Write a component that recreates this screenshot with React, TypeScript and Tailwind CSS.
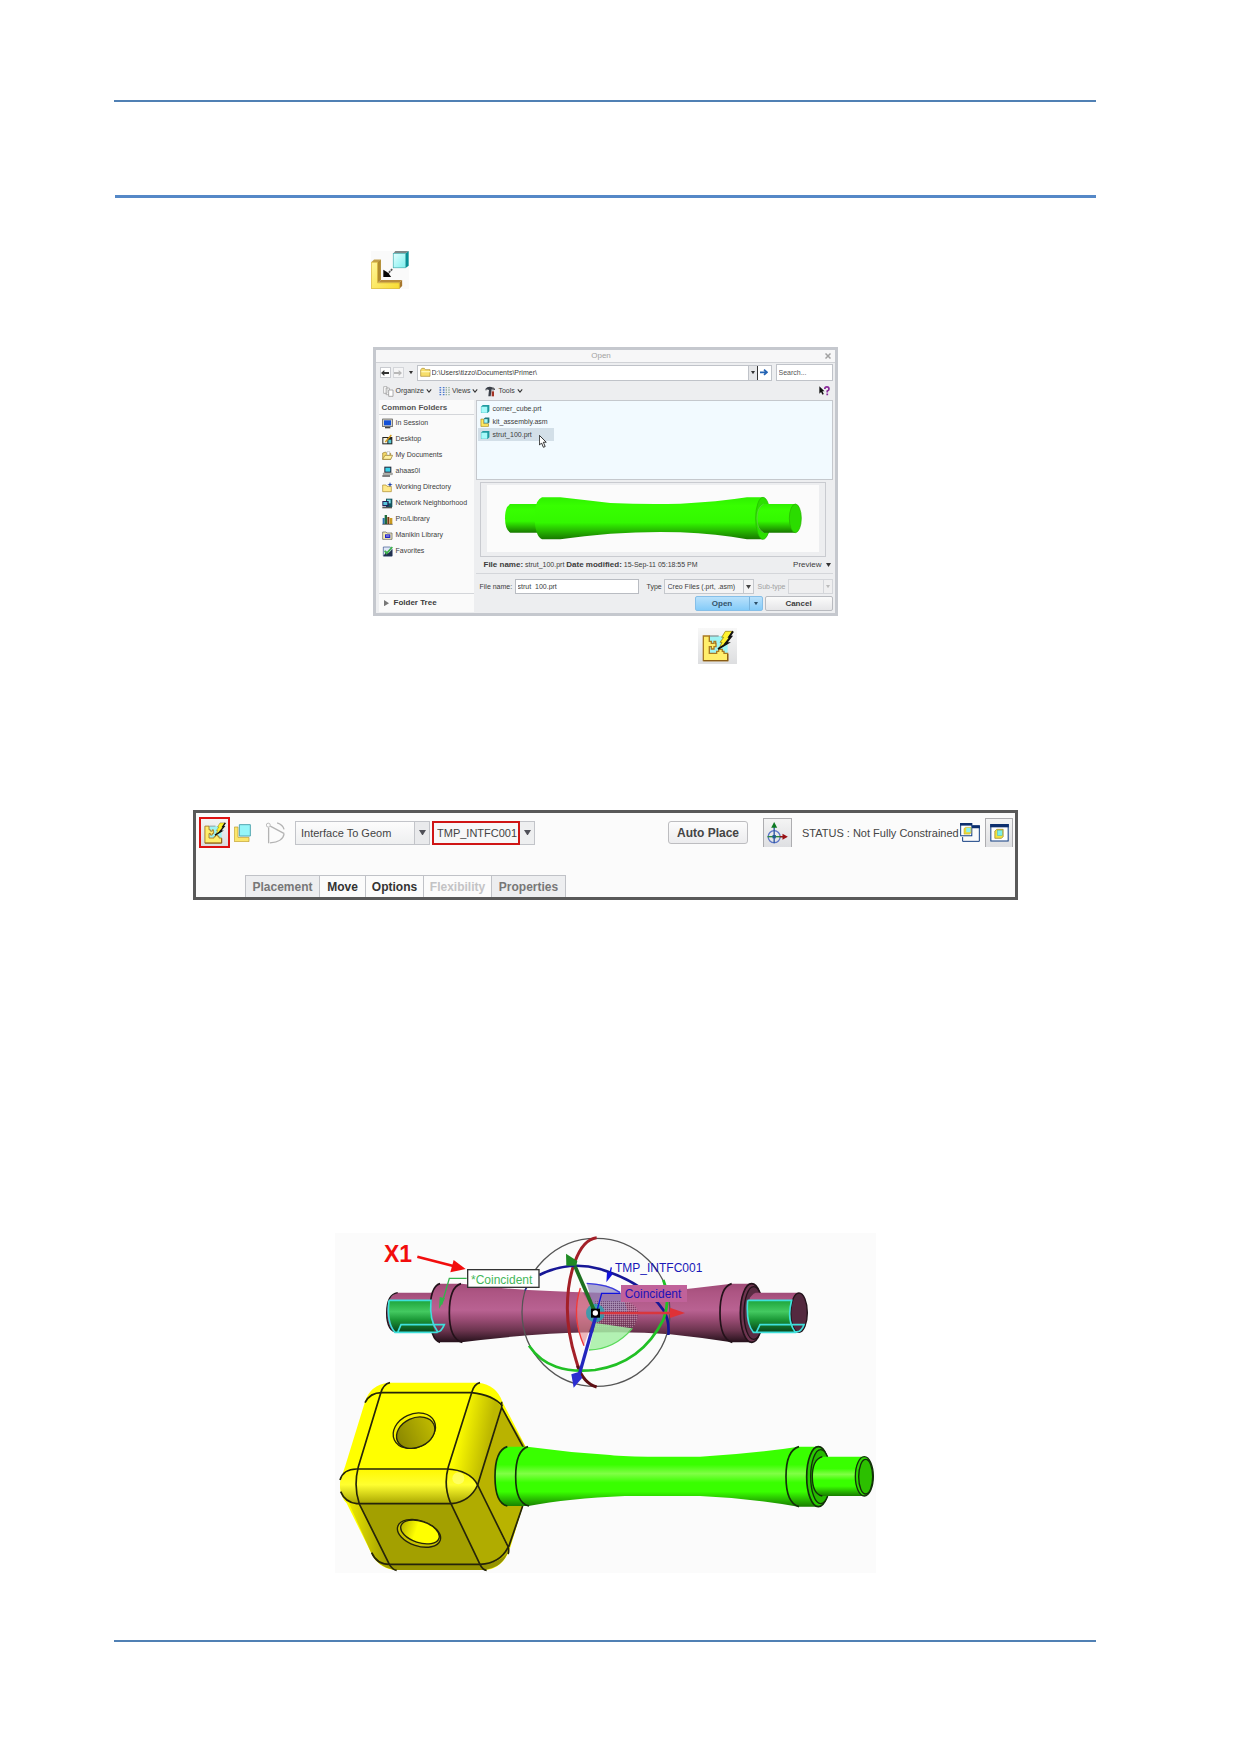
import React from "react";

const sans = "font-['Liberation_Sans',Arial,sans-serif]";

function AssembleIcon() {
  return (
    <svg viewBox="33 33 111 111" className="block size-[38px]" role="img" aria-label="Assemble">
      <defs>
        <linearGradient id="lfill" x1="0" y1="0" x2="1" y2="1">
          <stop offset="0" stopColor="#fff59c" />
          <stop offset="1" stopColor="#f8dc30" />
        </linearGradient>
        <linearGradient id="cfill" x1="0" y1="0" x2="1" y2="1">
          <stop offset="0" stopColor="#e4ffff" />
          <stop offset="1" stopColor="#7defee" />
        </linearGradient>
      </defs>
      <rect x="33" y="33" width="111" height="111" fill="#fafafa" />
      <path d="M34 66L42 58H62L54 66Z" fill="#c3a04a" />
      <path d="M52 66L62 58V118L52 126Z" fill="#b08a2e" />
      <path d="M52 126L62 118H124L116 126Z" fill="#b98d3c" />
      <path d="M116 126L124 118V135L116 143Z" fill="#a6762c" />
      <path d="M34 66H52V126H116V143H34Z" fill="url(#lfill)" stroke="#d0a824" strokeWidth="2" />
      <path d="M98 40L104 33H143L134 40Z" fill="#7d8888" />
      <path d="M134 40L143 33V76L134 83Z" fill="#078f95" />
      <rect x="98" y="40" width="36" height="42" fill="url(#cfill)" stroke="#43aeb0" strokeWidth="2" />
      <path d="M95 86L82 99" stroke="#555" strokeWidth="5" strokeDasharray="6 2" />
      <path d="M69 88L76 92L84 98L92 109H69Z" fill="#050505" />
    </svg>
  );
}

function InterfaceGlyph({ className }: { className: string }) {
  return (
    <svg viewBox="306 446 96 96" className={className} aria-hidden="true">
      <rect x="329" y="464" width="54" height="54" fill="#9df3f3" />
      <path d="M329 464H356" stroke="#8a9a9a" strokeWidth="4" />
      <path
        d="M310 464H328V480H334V486H342V480H347V486H348V496H342V503H334V496H328V516H350V510H356V504H367V510H372V516H383V538H310Z"
        fill="#ffee6c"
        stroke="#a97a22"
        strokeWidth="4"
      />
      <path d="M310 538H383V518" fill="none" stroke="#8a5c14" strokeWidth="4" />
      <path d="M376 450H399L388 466H393L377 486H382L356 503L366 483H360L371 468H365Z" fill="#fff22e" stroke="#8a7000" strokeWidth="2" />
      <path d="M399 450L388 466H393L377 486H382L354 503" fill="none" stroke="#111" strokeWidth="6" />
    </svg>
  );
}

function Rod({ id, top, mid, low }: { id: string; top: string; mid: string; low: string }) {
  return (
    <linearGradient id={id} x1="0" y1="0" x2="0" y2="1">
      <stop offset="0" stopColor={top} />
      <stop offset=".3" stopColor={top} />
      <stop offset=".45" stopColor={mid} />
      <stop offset=".6" stopColor={top} />
      <stop offset=".75" stopColor={top} />
      <stop offset="1" stopColor={low} />
    </linearGradient>
  );
}

function PreviewStrut() {
  return (
    <svg viewBox="350 15 996 201" className="block h-[67px] w-full bg-[#fbfbfb]" role="img" aria-label="Preview of strut_100.prt">
      <defs>
        <linearGradient id="pv" x1="0" y1="0" x2="0" y2="1">
          <stop offset="0" stopColor="#2ff000" />
          <stop offset=".2" stopColor="#37ff00" />
          <stop offset=".6" stopColor="#33f800" />
          <stop offset="1" stopColor="#187800" />
        </linearGradient>
      </defs>
      <path d="M420 72H520V158H420Q404 150 404 115T420 72Z" fill="url(#pv)" />
      <path
        d="M515 52H570Q640 60 720 69Q830 74 930 71Q1040 66 1130 52H1176Q1198 60 1200 115T1176 178H1130Q1040 162 930 157Q830 154 720 161Q640 168 570 178H515Q494 168 493 115T515 52Z"
        fill="url(#pv)"
      />
      <ellipse cx="1178" cy="115" rx="22" ry="63" fill="#2be000" stroke="#24b400" strokeWidth="2" />
      <path d="M1180 72H1275V158H1180Q1160 150 1160 115T1180 72Z" fill="url(#pv)" />
      <path d="M1180 72Q1160 82 1160 115T1180 158" fill="none" stroke="#6cca58" strokeWidth="2" />
      <ellipse cx="1275" cy="115" rx="18" ry="43" fill="#2bdc00" stroke="#27b000" strokeWidth="2" />
    </svg>
  );
}

function Svg({ children, className = "size-[11px]" }: { children: React.ReactNode; className?: string }) {
  return (
    <svg viewBox="0 0 33 33" className={"block shrink-0 " + className} aria-hidden="true">
      {children}
    </svg>
  );
}

const folders: { name: string; icon: React.ReactNode }[] = [
  {
    name: "In Session",
    icon: (
      <Svg>
        <rect x="2" y="3" width="29" height="23" fill="#d6d2c4" stroke="#444" strokeWidth="2" />
        <rect x="6" y="7" width="21" height="15" fill="#1250d8" />
        <path d="M9 29H25" stroke="#444" strokeWidth="4" />
      </Svg>
    ),
  },
  {
    name: "Desktop",
    icon: (
      <Svg>
        <path d="M1 9H31V31H1Z" fill="#222" />
        <rect x="4" y="12" width="12" height="16" fill="#f4f4e8" />
        <rect x="19" y="17" width="9" height="11" fill="#57c9d4" />
        <path d="M10 24L28 3" stroke="#d69b17" strokeWidth="4" />
      </Svg>
    ),
  },
  {
    name: "My Documents",
    icon: (
      <Svg>
        <path d="M2 28V9L11 6L14 10H26V28Z" fill="#f2d766" stroke="#96782a" strokeWidth="2" />
        <path d="M2 28L9 16H32L26 28Z" fill="#fff1a0" stroke="#96782a" strokeWidth="2" />
        <path d="M15 5H23V15H15Z" fill="#fff" stroke="#777" />
      </Svg>
    ),
  },
  {
    name: "ahaas0l",
    icon: (
      <Svg>
        <path d="M7 2H28V20H7Z" fill="#223" />
        <path d="M10 5H25V17H10Z" fill="#3ed0e8" />
        <path d="M4 21H31V26H4Z" fill="#c9c9c0" stroke="#333" />
        <path d="M1 30H24" stroke="#444" strokeWidth="4" />
      </Svg>
    ),
  },
  {
    name: "Working Directory",
    icon: (
      <Svg>
        <path d="M2 29V9H12L15 13H28V29Z" fill="#ffe98a" stroke="#a98a2c" strokeWidth="2" />
        <path d="M24 0L26 6L32 8L26 10L24 16L22 10L16 8L22 6Z" fill="#1c3fa8" />
      </Svg>
    ),
  },
  {
    name: "Network Neighborhood",
    icon: (
      <Svg>
        <rect x="12" y="2" width="19" height="25" fill="#17555f" />
        <rect x="15" y="5" width="11" height="11" fill="#7ee1ea" />
        <rect x="1" y="9" width="19" height="16" fill="#225" />
        <rect x="4" y="12" width="12" height="9" fill="#55c4dc" />
        <path d="M1 29H30" stroke="#555" strokeWidth="4" />
      </Svg>
    ),
  },
  {
    name: "Pro/Library",
    icon: (
      <Svg>
        <rect x="2" y="12" width="6" height="18" fill="#2b6fb0" />
        <rect x="8" y="3" width="7" height="27" fill="#1f6a3c" />
        <rect x="16" y="9" width="6" height="21" fill="#7a3b12" />
        <rect x="23" y="12" width="8" height="18" fill="#c99a20" />
        <path d="M1 31H32" stroke="#222" strokeWidth="2" />
      </Svg>
    ),
  },
  {
    name: "Manikin Library",
    icon: (
      <Svg>
        <path d="M2 28V6H12L15 9H30V28Z" fill="#f6efb8" stroke="#555" strokeWidth="2" />
        <rect x="9" y="13" width="16" height="11" fill="#2023c8" />
        <path d="M12 18H22" stroke="#fff" strokeWidth="2" />
      </Svg>
    ),
  },
  {
    name: "Favorites",
    icon: (
      <Svg>
        <path d="M4 3H25L30 9V30H4Z" fill="#dfe8f8" stroke="#38518a" strokeWidth="2" />
        <path d="M4 30L14 16L19 22L31 10V31H4Z" fill="#22314f" />
        <path d="M8 14L14 22L31 3" fill="none" stroke="#3db54a" strokeWidth="5" />
      </Svg>
    ),
  },
];

function PartIcon() {
  return (
    <Svg className="size-[10px]">
      <path d="M3 9L9 3H31V24L25 30H3Z" fill="#1f9ba0" />
      <rect x="4" y="9" width="20" height="20" fill="#a6fafa" />
    </Svg>
  );
}

function AsmIcon() {
  return (
    <Svg className="size-[10px]">
      <path d="M3 7H12V22H28V31H3Z" fill="#ffea62" stroke="#a17c14" strokeWidth="2" />
      <path d="M13 5L17 2H31V18L27 21H13Z" fill="#23777c" />
      <rect x="14" y="7" width="11" height="12" fill="#a6fafa" />
    </Svg>
  );
}

const files = [
  { name: "corner_cube.prt", icon: <PartIcon />, selected: false },
  { name: "kit_assembly.asm", icon: <AsmIcon />, selected: false },
  { name: "strut_100.prt", icon: <PartIcon />, selected: true },
];

function Caret({ className = "w-[5px] text-[#444]" }: { className?: string }) {
  return (
    <svg viewBox="0 0 10 8" className={"block shrink-0 " + className} aria-hidden="true">
      <path d="M0 0H10L5 8Z" fill="currentColor" />
    </svg>
  );
}

function Chevron() {
  return (
    <svg viewBox="0 0 12 9" className="block h-[4px] w-[6px]" aria-hidden="true">
      <path d="M1 1L6 7L11 1" fill="none" stroke="#333" strokeWidth="2.4" />
    </svg>
  );
}

function OpenDialog() {
  return (
    <section
      aria-label="Open"
      className="mx-auto flex h-[269px] w-[465px] max-w-full flex-col border-[3px] border-[#c5c8ce] bg-[#edeef0] text-[7px] leading-[10px] text-[#3c3c3c]"
    >
      <header className="relative flex h-[13px] items-center justify-center border-b border-[#d0d2d6] bg-[#f7f7f8] pr-2 text-[8px] text-[#a2a2a2]">
        Open
        <button aria-label="Close" className="absolute right-1 top-[3px]">
          <svg viewBox="0 0 12 12" className="block size-[6px]">
            <path d="M1 1L11 11M11 1L1 11" stroke="#a2a2a2" strokeWidth="3" />
          </svg>
        </button>
      </header>

      <div className="flex h-[19px] items-center pl-1 pr-[2px]">
        <button aria-label="Back" className="flex size-[11px] items-center justify-center border border-[#c9cbd0] bg-white">
          <svg viewBox="0 0 24 18" className="block w-[8px]">
            <path d="M0 9L10 0V6H24V12H10V18Z" fill="#333" />
          </svg>
        </button>
        <button aria-label="Forward" className="ml-[2px] flex size-[11px] items-center justify-center border border-[#d4d6da] bg-[#f5f5f6]">
          <svg viewBox="0 0 24 18" className="block w-[8px]">
            <path d="M24 9L14 0V6H0V12H14V18Z" fill="#b8b8b8" />
          </svg>
        </button>
        <button aria-label="Recent" className="ml-[5px] mr-1">
          <Caret className="w-[4px] text-[#333]" />
        </button>
        <div className="flex h-4 min-w-0 flex-1 items-center border border-[#c0c3c9] bg-white pl-[2px]">
          <Svg>
            <path d="M2 28V8L6 4H13L16 8H30V28Z" fill="#f7df6c" stroke="#a98a2c" strokeWidth="2" />
            <path d="M4 14H30" stroke="#fff6b4" strokeWidth="4" />
          </Svg>
          <input
            aria-label="Folder path"
            defaultValue={"D:\\Users\\tizzo\\Documents\\Primer\\"}
            className="min-w-0 flex-1 bg-transparent px-[1px] outline-none"
          />
          <button aria-label="Path history" className="flex h-full w-[10px] items-center justify-center border-x border-l-[#c0c3c9] border-r-[#333] bg-[#e6e7e9]">
            <Caret className="w-[4px] text-[#333]" />
          </button>
          <button aria-label="Go" className="flex w-[13px] justify-center">
            <svg viewBox="0 0 24 20" className="block w-[8px]">
              <path d="M0 10H20M12 2L21 10L12 18" fill="none" stroke="#2464b4" strokeWidth="5" />
            </svg>
          </button>
        </div>
        <input
          aria-label="Search"
          placeholder="Search..."
          className="ml-1 h-[17px] w-[57px] border border-[#c0c3c9] bg-white px-[2px] outline-none placeholder:text-[#555]"
        />
      </div>

      <div className="flex h-[18px] items-center pl-[7px] pr-[5px]">
        <button className="flex items-center gap-[2px]">
          <Svg>
            <path d="M2 2H12V22H2Z M9 6H19V26H9Z" fill="#fff" stroke="#999" strokeWidth="2" />
            <path d="M17 12H30V31H17Z" fill="#fff" stroke="#888" strokeWidth="2" />
          </Svg>
          Organize <Chevron />
        </button>
        <button className="ml-[7px] flex items-center gap-[2px]">
          <Svg>
            <path d="M4 3V31M14 3V31" stroke="#4b78d0" strokeWidth="5" strokeDasharray="4 3" />
            <path d="M22 3V31M30 3V31" stroke="#8fae9a" strokeWidth="4" strokeDasharray="4 3" />
          </Svg>
          Views <Chevron />
        </button>
        <button className="ml-[7px] flex items-center gap-[2px]">
          <Svg>
            <path d="M1 9Q8 0 19 3L30 8V12L20 10L17 31H10L12 12L5 10L3 15Z" fill="#3a3f48" />
            <path d="M20 16H27V31H20Z" fill="#a33323" />
            <path d="M24 3V14" stroke="#777" strokeWidth="3" />
          </Svg>
          Tools <Chevron />
        </button>
        <button aria-label="Context help" className="ml-auto">
          <svg viewBox="0 0 32 28" className="block h-[10px] w-[11px]">
            <path d="M1 0V22L6 17L10 25L14 23L10 15H16Z" fill="#111" />
            <path d="M17 8Q17 2 23 2T29 8Q29 12 24 14V18M24 21V26" fill="none" stroke="#8a2b9b" strokeWidth="5" />
          </svg>
        </button>
      </div>

      <div className="flex min-h-0 flex-1 gap-[2px] pb-px pl-[3px] pr-[2px]">
        <nav aria-label="Common Folders" className="flex w-[95px] shrink-0 flex-col bg-[#fafafa]">
          <h2 className="flex h-[15px] items-end border-b border-[#d4d6da] pb-px pl-[3px] text-[8px] font-bold text-[#555]">
            Common Folders
          </h2>
          <ul>
            {folders.map((f) => (
              <li key={f.name}>
                <button className="flex h-4 w-full items-center gap-[3px] whitespace-nowrap pl-[3px] text-left">
                  {f.icon}
                  {f.name}
                </button>
              </li>
            ))}
          </ul>
          <button className="mt-auto flex h-[19px] items-center gap-[5px] border-t border-[#d4d6da] pl-[5px] text-[8px] font-bold">
            <svg viewBox="0 0 8 10" className="block w-[5px]" aria-hidden="true">
              <path d="M0 0L8 5L0 10Z" fill="#777" />
            </svg>
            Folder Tree
          </button>
        </nav>

        <div className="flex min-w-0 flex-1 flex-col">
          <ul className="h-[80px] border border-[#c5c8cd] bg-[#f2faff] p-px">
            {files.map((f) => (
              <li key={f.name}>
                <button
                  className={
                    "relative flex h-[13px] w-[76px] items-center gap-[3px] pl-[2px] " +
                    (f.selected ? "bg-[#d3dfe8]" : "")
                  }
                >
                  {f.icon}
                  {f.name}
                  {f.selected && (
                    <svg viewBox="0 0 22 36" className="absolute left-[61px] top-[7px] block h-[13px] w-[8px]" aria-hidden="true">
                      <path d="M1 1V28L7 22L12 34L17 32L12 20H20Z" fill="#fff" stroke="#222" strokeWidth="2.5" />
                    </svg>
                  )}
                </button>
              </li>
            ))}
          </ul>

          <div className="ml-1 mr-[7px] mt-[2px] h-[75px] border border-[#c9cbd0] px-[6px] pt-[2px]">
            <PreviewStrut />
          </div>

          <div className="flex h-[17px] items-center justify-between border-b border-[#d4d6da] pl-2 pr-[2px]">
            <p>
              <b className="text-[8px]">File name:</b> strut_100.prt <b className="text-[8px]">Date modified:</b> 15-Sep-11 05:18:55 PM
            </p>
            <button className="flex items-center gap-1 text-[8px]">
              Preview <Caret className="w-[5px] text-[#333]" />
            </button>
          </div>

          <div className="mt-[5px] flex h-[15px] items-center pl-1">
            <label htmlFor="filename" className="w-[35px] shrink-0">
              File name:
            </label>
            <input
              id="filename"
              defaultValue="strut_100.prt"
              className="h-[15px] min-w-0 flex-1 border border-[#b9bcc2] bg-white px-[2px] leading-[13px] outline-none"
            />
            <label htmlFor="type" className="ml-2 w-[17px] shrink-0">
              Type
            </label>
            <span className="flex h-[15px] w-[90px] items-center border border-[#c5c8cd] bg-[#f4f4f5]">
              <select id="type" className="min-w-0 flex-1 appearance-none bg-transparent pl-[3px] outline-none">
                <option>Creo Files (.prt, .asm)</option>
              </select>
              <span className="flex h-full w-[10px] items-center justify-center border-l border-[#c5c8cd]">
                <Caret className="w-[5px] text-[#444]" />
              </span>
            </span>
            <label htmlFor="subtype" className="ml-1 w-[30px] shrink-0 text-[#a0a0a0]">
              Sub-type
            </label>
            <span className="flex h-[15px] w-[45px] items-center border border-[#d4d6da] bg-[#efeff0]">
              <select id="subtype" disabled className="min-w-0 flex-1 appearance-none bg-transparent outline-none" />
              <span className="flex h-full w-[9px] items-center justify-center border-l border-[#d4d6da]">
                <Caret className="w-[4px] text-[#bbb]" />
              </span>
            </span>
          </div>

          <div className="mt-[2px] flex h-[15px] justify-end gap-[2px] text-[8px] font-bold">
            <div className="flex w-[68px] rounded-[2px] border border-[#86bfe8] bg-linear-to-b from-[#b9e1fb] to-[#84cbf8]">
              <button className="flex-1 text-[#33536b]">Open</button>
              <button aria-label="More open options" className="flex w-[13px] items-center justify-center border-l border-[#79b3dc]">
                <Caret className="w-[4px] text-[#2c4f68]" />
              </button>
            </div>
            <button className="w-[68px] rounded-[2px] border border-[#b9bbc0] bg-linear-to-b from-[#fbfbfb] to-[#e6e6e8]">
              Cancel
            </button>
          </div>
        </div>
      </div>
    </section>
  );
}

const tabs = [
  { name: "Placement", style: "w-[74px] bg-[#edeef0] text-[#777]" },
  { name: "Move", style: "w-[46px] text-[#333]" },
  { name: "Options", style: "w-[58px] text-[#333]" },
  { name: "Flexibility", style: "w-[68px] text-[#c3c3c5]" },
  { name: "Properties", style: "w-[75px] border-r-1 bg-[#edeef0] text-[#777]" },
];

function PlacementBar() {
  return (
    <section
      aria-label="Component placement"
      className="ml-[79px] mr-[78px] flex h-[90px] flex-col justify-between border-[3px] border-[#595959] bg-[#fbfbfb] text-[11px] leading-4 text-[#444]"
    >
      <div className="flex items-center pl-[3px] pr-[2px] pt-1">
        <button
          aria-label="Place using interface"
          className="flex size-[31px] items-center justify-center border-2 border-[#dd1111] bg-linear-to-b from-[#f3f3f3] to-[#dcdde0]"
        >
          <InterfaceGlyph className="block size-[22px]" />
        </button>
        <button aria-label="Place manually" className="ml-1">
          <svg viewBox="0 0 51 54" className="block h-[18px] w-[17px]">
            <path d="M1 9H12V40H45V53H1Z" fill="#fbe66c" stroke="#b8952c" strokeWidth="2" />
            <path d="M16 2H49V36H16Z" fill="#95f5f8" stroke="#52a6b0" strokeWidth="3" />
          </svg>
        </button>
        <button aria-label="Convert constraints" className="ml-[15px]">
          <svg viewBox="228 52 58 66" className="block h-[22px] w-[19px]">
            <circle cx="235" cy="61" r="6" fill="none" stroke="#bbb" strokeWidth="3" />
            <path d="M236 68V116M241 64L284 87M262 54Q280 60 283 74M283 88Q280 112 240 115" fill="none" stroke="#b3b3b3" strokeWidth="4" />
          </svg>
        </button>
        <span className="ml-[10px] flex h-6 w-[135px] items-center border border-[#c2c4c9] bg-linear-to-b from-[#fcfcfc] to-[#eeeff0]">
          <select aria-label="Interface type" className="min-w-0 flex-1 appearance-none bg-transparent pl-[5px] outline-none">
            <option>Interface To Geom</option>
          </select>
          <span className="flex h-full w-[15px] items-center justify-center border-l border-[#c2c4c9] bg-[#e9eaec]">
            <Caret className="w-[7px] text-[#505058]" />
          </span>
        </span>
        <span className="ml-[2px] flex h-6 w-[103px] items-center">
          <select
            aria-label="Interface"
            className="h-6 w-[88px] appearance-none border-2 border-[#cf1515] bg-[#f7f7f8] pl-[3px] outline-none"
          >
            <option>TMP_INTFC001</option>
          </select>
          <span className="flex h-full flex-1 items-center justify-center border border-l-0 border-[#c2c4c9] bg-[#eeeff0]">
            <Caret className="w-[7px] text-[#505058]" />
          </span>
        </span>
        <button className="ml-auto h-[23px] w-[80px] rounded-[3px] border border-[#bdbdc0] bg-linear-to-b from-[#fcfcfc] to-[#ececee] text-[12px] font-bold">
          Auto Place
        </button>
        <button
          aria-label="3D dragger"
          className="ml-[15px] flex size-[29px] items-center justify-center border border-b-0 border-[#adadb0] bg-linear-to-b from-[#f4f4f4] to-[#dedfe2]"
        >
          <svg viewBox="346 53 62 66" className="block h-[22px] w-[21px]">
            <circle cx="367" cy="97" r="18" fill="none" stroke="#5c76c8" strokeWidth="4" />
            <path d="M367 62V117" stroke="#2a55a0" strokeWidth="4" />
            <path d="M347 97H398" stroke="#2c8a3a" strokeWidth="4" />
            <path d="M384 97H398" stroke="#901818" strokeWidth="4" />
            <path d="M358 70L367 53L376 70Z" fill="#0d7a22" />
            <path d="M392 88L408 97L392 106Z" fill="#9a0f14" />
            <rect x="362" y="92" width="10" height="10" fill="#235b94" />
          </svg>
        </button>
        <output className="ml-[10px] w-[158px] whitespace-nowrap">STATUS : Not Fully Constrained</output>
        <button aria-label="Separate window">
          <svg viewBox="930 53 61 58" className="block h-[19px] w-[20px]">
            <path d="M968 62H989V109H938V96" fill="none" stroke="#0d3a80" strokeWidth="3" />
            <path d="M966 60H991V69H966Z" fill="#0d2f6e" />
            <rect x="932" y="55" width="34" height="37" fill="#fff" stroke="#0d3a80" strokeWidth="3" />
            <path d="M930 53H967V61H930Z" fill="#0d2f6e" />
            <path d="M942 70L947 66H964V82L960 87H942Z" fill="#e9d83a" stroke="#a48e20" />
            <rect x="949" y="68" width="13" height="13" fill="#8cf2ee" />
          </svg>
        </button>
        <button
          aria-label="Assembly window"
          className="ml-[5px] flex h-[29px] w-7 items-center justify-center border border-b-0 border-[#adadb0] bg-linear-to-b from-[#f4f4f4] to-[#dedfe2]"
        >
          <svg viewBox="1019 59 56 54" className="block h-[18px] w-[19px]">
            <rect x="1021" y="61" width="52" height="49" fill="#fff" stroke="#0d3a80" strokeWidth="3" />
            <path d="M1019 59H1075V69H1019Z" fill="#0d2f6e" />
            <path d="M1033 80L1039 75H1058V97L1053 102H1033Z" fill="#f2e13e" stroke="#927d20" strokeWidth="2" />
            <rect x="1040" y="78" width="15" height="16" fill="#7ceee9" stroke="#3a9a9a" />
          </svg>
        </button>
      </div>
      <div role="tablist" className="ml-[49px] flex h-[22px]">
        {tabs.map((t) => (
          <button
            key={t.name}
            role="tab"
            className={"border-l border-t border-[#c0c2c7] text-center text-[12px] font-bold " + t.style}
          >
            {t.name}
          </button>
        ))}
      </div>
    </section>
  );
}

function Figure() {
  return (
    <svg
      viewBox="0 0 1623 1020"
      className={"mx-auto block h-[340px] w-[541px] max-w-full bg-[#fbfbfb] " + sans}
      role="img"
      aria-label="Strut placed over the cube assembly"
    >
      <defs>
        <linearGradient id="pu" x1="0" y1="0" x2="0" y2="1">
          <stop offset="0" stopColor="#a04c78" />
          <stop offset=".15" stopColor="#ad5583" />
          <stop offset=".45" stopColor="#b96292" />
          <stop offset=".6" stopColor="#9c4d76" />
          <stop offset=".8" stopColor="#6b344e" />
          <stop offset="1" stopColor="#25111b" />
        </linearGradient>
        <linearGradient id="gp" x1="0" y1="0" x2="0" y2="1">
          <stop offset="0" stopColor="#1ea53c" />
          <stop offset=".35" stopColor="#43c960" />
          <stop offset=".6" stopColor="#1c9a38" />
          <stop offset="1" stopColor="#07421a" />
        </linearGradient>
        <Rod id="gr" top="#39ff00" mid="#80ff45" low="#187c00" />
        <linearGradient id="edge" x1="0" y1="0" x2="0" y2="1">
          <stop offset="0" stopColor="#fff800" />
          <stop offset=".45" stopColor="#ffff30" />
          <stop offset="1" stopColor="#a8a500" />
        </linearGradient>
        <linearGradient id="side" x1="0" y1="0" x2="1" y2=".3">
          <stop offset=".3" stopColor="#ffff00" />
          <stop offset=".85" stopColor="#bdb800" />
        </linearGradient>
        <linearGradient id="lowL" x1="0" y1="0" x2="1" y2="0">
          <stop offset="0" stopColor="#f0ec00" />
          <stop offset=".8" stopColor="#a3a000" />
        </linearGradient>
        <linearGradient id="hole" x1="0" y1="0" x2="1" y2="0">
          <stop offset="0" stopColor="#8a8700" />
          <stop offset="1" stopColor="#c0bb00" />
        </linearGradient>
        <linearGradient id="hole2" x1="0" y1="0" x2="1" y2="0">
          <stop offset="0" stopColor="#bab600" />
          <stop offset=".4" stopColor="#ffff00" />
        </linearGradient>
        <pattern id="dots" width="6" height="6" patternUnits="userSpaceOnUse">
          <rect width="3" height="3" fill="#5c3a55" />
          <rect x="3" y="3" width="3" height="3" fill="#b3a0ae" />
        </pattern>
      </defs>

      {/* strut being placed */}
      <path d="M187 179H320V298H187Q155 290 155 240T187 179Z" fill="url(#pu)" />
      <path d="M188 179Q155 184 155 240T188 298" fill="none" stroke="#23121a" strokeWidth="4" />
      <path
        d="M315 152H380Q500 168 645 174T845 181Q960 180 1075 166L1190 152H1250Q1282 160 1282 240T1250 328H1190Q1100 314 1005 304Q930 298 845 298Q740 298 645 302Q500 312 380 328H315Q285 318 285 240T315 152Z"
        fill="url(#pu)"
      />
      <g fill="none" stroke="#23121a" strokeWidth="5">
        <path d="M315 152Q285 160 285 240T315 328" />
        <path d="M378 152Q343 162 343 240T382 328" />
        <path d="M1190 152Q1155 162 1155 240T1192 328" />
      </g>
      <ellipse cx="1250" cy="240" rx="34" ry="88" fill="#6d3550" stroke="#23121a" strokeWidth="5" />
      <ellipse cx="1256" cy="240" rx="29" ry="79" fill="#5b2c44" stroke="#23121a" strokeWidth="4" />
      <path d="M1262 179H1392V298H1262Q1236 290 1236 240T1262 179Z" fill="url(#pu)" />
      <ellipse cx="1392" cy="239" rx="25" ry="59" fill="#54293f" stroke="#23121a" strokeWidth="4" />

      {/* highlighted surfaces */}
      <path d="M162 202H286Q282 250 300 298H180Q156 260 162 202Z" fill="url(#gp)" />
      <path d="M1238 202H1370Q1356 250 1380 298H1255Q1232 260 1238 202Z" fill="url(#gp)" />
      <g fill="none" stroke="#3fe0dc" strokeWidth="5">
        <path d="M162 202H288Q282 262 308 296Q318 298 328 275H198L188 298M162 202Q154 270 180 298H308" />
        <path d="M1238 202H1370Q1354 262 1380 296Q1398 300 1407 275H1275L1264 298M1238 202Q1232 270 1255 298H1384" />
      </g>

      {/* dragger */}
      <circle cx="783" cy="238" r="222" fill="none" stroke="#555" strokeWidth="4" />
      <path d="M735 165Q706 250 747 338L781 240Z" fill="#e28a92" fillOpacity=".6" />
      <path d="M736 165Q708 250 747 338" fill="none" stroke="#f03a3a" strokeWidth="4" />
      <path d="M755 151Q830 152 860 182L880 240H781Z" fill="#8d86bb" fillOpacity=".7" />
      <path d="M755 151Q820 154 855 178" fill="none" stroke="#3a3ae0" strokeWidth="4" />
      <path d="M781 205L880 205Q910 225 910 240Q905 270 892 286H781Z" fill="url(#dots)" fillOpacity=".75" />
      <path d="M762 351L781 270L890 286Q840 350 762 351Z" fill="#a4efa4" fillOpacity=".85" />
      <path d="M762 351Q840 348 892 286" fill="none" stroke="#5ada5a" strokeWidth="4" />
      <path d="M785 14C728 20 697 130 697 226S725 380 730 406" fill="none" stroke="#a32028" strokeWidth="9" />
      <path d="M728 398Q745 450 785 462" fill="none" stroke="#5d1014" strokeWidth="9" />
      <path d="M570 172Q585 145 613 126" fill="none" stroke="#24249a" strokeWidth="4" />
      <path d="M613 126Q700 82 795 108Q930 150 985 231Q1004 262 1000 306" fill="none" stroke="#171796" strokeWidth="8" />
      <path d="M582 338C625 400 690 420 780 411C890 395 950 330 985 260Q1008 200 985 141" fill="none" stroke="#21c025" strokeWidth="8" />
      <circle cx="781" cy="240" r="28" fill="#2b9fae" fillOpacity=".85" />
      <path d="M720 100L780 238" stroke="#1d7020" strokeWidth="11" />
      <path d="M693 62L727 84L724 98L694 98Z" fill="#1f8a24" />
      <path d="M785 241L733 424" stroke="#2326bd" strokeWidth="10" />
      <path d="M709 424L733 416L742 434L716 464Z" fill="#2c2ed0" />
      <path d="M785 240H1008" stroke="#d9363d" strokeWidth="8" />
      <path d="M1005 224L1050 240L1005 255Z" fill="#df3137" />
      <path d="M856 181H800L784 240" fill="none" stroke="#1111dd" strokeWidth="4" />
      <rect x="768" y="227" width="27" height="27" fill="#000" />
      <circle cx="781" cy="240" r="8" fill="#fff" />

      {/* callouts */}
      <path d="M395 136H343L320 215" fill="none" stroke="#35b34c" strokeWidth="4" />
      <path d="M314 192L330 196L312 228Z" fill="#35b34c" />
      <rect x="398" y="110" width="214" height="53" fill="#fff" stroke="#333" strokeWidth="4" />
      <text x="408" y="153" fontSize="36" fill="#45b75a">*Coincident</text>
      <text x="147" y="86" fontSize="69" fontWeight="bold" fill="#f20d0d">X1</text>
      <path d="M247 71L355 99" stroke="#f20d0d" strokeWidth="8" />
      <path d="M356 81L392 108L346 118Z" fill="#f20d0d" />
      <text x="840" y="117" fontSize="36" fill="#1818b8">TMP_INTFC001</text>
      <path d="M829 103L825 122" stroke="#1111dd" strokeWidth="4" />
      <path d="M816 116L834 122L814 148Z" fill="#1111dd" />
      <rect x="858" y="156" width="198" height="51" fill="#c0629a" />
      <text x="869" y="194" fontSize="36" fill="#1c12b8">Coincident</text>

      {/* cube */}
      <g transform="translate(-15 411)">
        <path
          d="M175 38H445Q500 45 517 95L592 240L578 410L537 545Q510 600 460 600H190Q140 590 122 545L50 400Q30 380 30 345Q32 325 45 290L105 95Q120 45 175 38Z"
          fill="#ffff00"
        />
        <path d="M515 110L592 240L578 410L537 540L443 345Z" fill="#b9b300" />
        <path d="M425 68Q490 75 513 110L443 345Q410 297 350 297Z" fill="url(#side)" />
        <path d="M50 385L88 402L178 583L195 600Q140 590 122 545Z" fill="url(#lowL)" />
        <path d="M88 402H365L450 583H178Z" fill="#a3a000" />
        <path d="M365 402Q420 395 443 345L536 540Q515 580 450 583Z" fill="#b0ac00" />
        <path d="M178 583H450Q515 580 536 540Q520 595 460 600H190Z" fill="#969300" />
        <path d="M80 297H360Q420 300 443 345Q420 395 360 402H80Q30 385 30 345T80 297Z" fill="url(#edge)" />
        <circle cx="385" cy="325" r="18" fill="#ffff8a" opacity=".6" />
        <ellipse cx="253" cy="182" rx="66" ry="50" transform="rotate(-25 253 182)" fill="#f7f300" stroke="#25240a" strokeWidth="4" />
        <ellipse cx="257" cy="188" rx="60" ry="44" transform="rotate(-25 257 188)" fill="url(#hole)" stroke="#25240a" strokeWidth="4" />
        <ellipse cx="267" cy="490" rx="67" ry="38" transform="rotate(18 267 490)" fill="#c7c200" stroke="#25240a" strokeWidth="4" />
        <ellipse cx="270" cy="486" rx="60" ry="32" transform="rotate(18 270 486)" fill="url(#hole2)" stroke="#25240a" strokeWidth="4" />
        <g fill="none" stroke="#25240a" strokeWidth="5">
          <path d="M105 98Q120 68 155 68H425Q490 75 517 108" />
          <path d="M180 38Q160 42 152 70L85 290Q70 350 88 402L178 583Q188 600 200 601" />
          <path d="M450 38Q432 42 425 68L355 290Q340 345 360 395L450 583Q458 600 470 601" />
          <path d="M30 330Q40 297 80 297H350Q420 300 443 345Q420 395 365 401H80Q45 397 32 365" />
          <path d="M515 95V112L443 345L534 530Q538 545 534 552M515 112L580 232M578 408L536 530" />
          <path d="M125 548Q140 583 178 583H450Q510 580 534 532" />
        </g>
      </g>

      {/* assembled strut */}
      <path
        d="M515 641H577Q700 658 825 666Q870 671 960 671H1095Q1250 663 1390 641H1450V821H1390Q1240 795 1095 789H870Q700 796 580 819H515Q480 805 480 731T515 641Z"
        fill="url(#gr)"
      />
      <g fill="none" stroke="#12300a" strokeWidth="5">
        <path d="M517 641Q480 652 480 731T517 819" />
        <path d="M579 641Q542 652 542 731T582 819" />
        <path d="M1392 641Q1353 652 1353 731T1392 821" />
      </g>
      <ellipse cx="1450" cy="731" rx="35" ry="90" fill="#29cc00" stroke="#12300a" strokeWidth="5" />
      <ellipse cx="1457" cy="731" rx="30" ry="81" fill="#25b800" stroke="#12300a" strokeWidth="4" />
      <path d="M1462 671H1588V789H1462Q1432 780 1432 731T1462 671Z" fill="url(#gr)" />
      <path d="M1462 671Q1432 680 1432 731T1462 789" fill="none" stroke="#12300a" strokeWidth="4" />
      <ellipse cx="1588" cy="730" rx="27" ry="59" fill="#2fd800" stroke="#12300a" strokeWidth="4" />
      <ellipse cx="1592" cy="731" rx="21" ry="52" fill="#2cc000" stroke="#12300a" strokeWidth="4" />
    </svg>
  );
}

export default function App() {
  return (
    <main className={"flex min-h-screen flex-col bg-white pb-[111px] pl-[114px] pr-36 pt-[100px] " + sans}>
      <hr className="h-[2px] border-0 bg-[#5080b4]" />
      <hr className="ml-px mt-[93px] h-[3px] border-0 bg-[#5588c7]" />
      <div className="ml-[257px] mt-[53px]">
        <AssembleIcon />
      </div>
      <div className="mt-[58px]">
        <OpenDialog />
      </div>
      <div className="ml-[584px] mt-3 flex h-9 w-[39px] items-center justify-center bg-linear-to-b from-[#f8f8f8] to-[#dddee0]">
        <InterfaceGlyph className="block size-8" />
      </div>
      <div className="mt-[146px]">
        <PlacementBar />
      </div>
      <div className="mt-[333px]">
        <Figure />
      </div>
      <hr className="mt-[67px] h-[2px] border-0 bg-[#5080b4]" />
    </main>
  );
}
